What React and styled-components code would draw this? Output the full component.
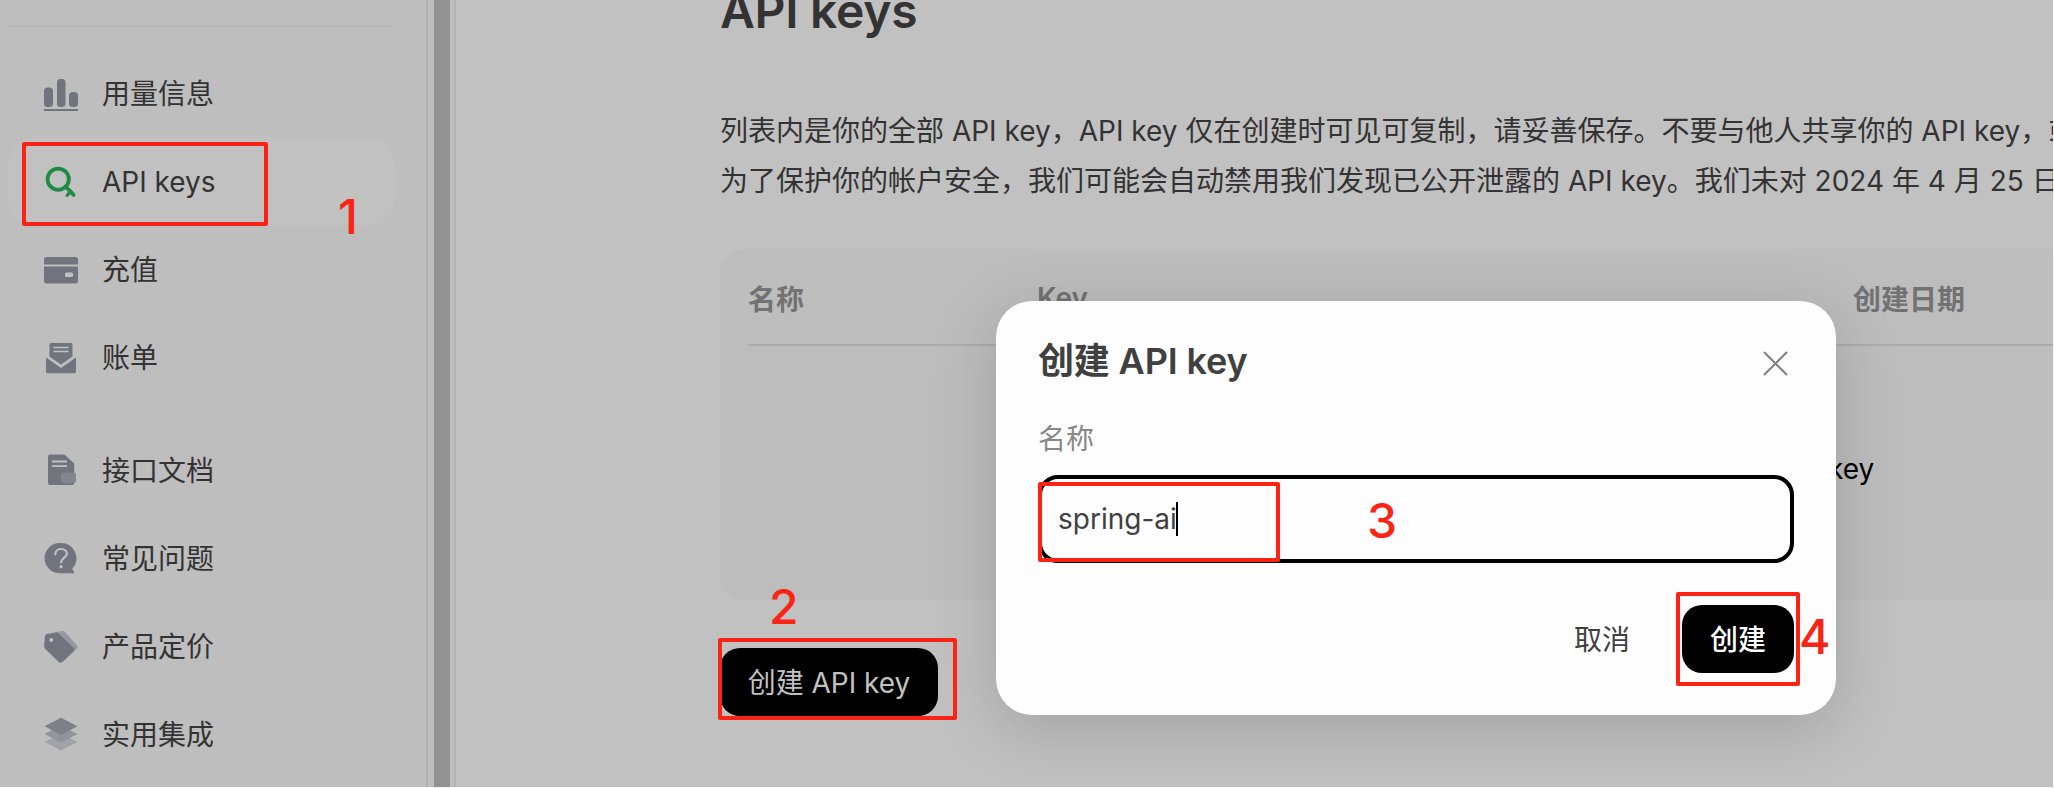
import React from 'react';
import styled, { createGlobalStyle } from 'styled-components';

const Global = createGlobalStyle`
  *, *::before, *::after { box-sizing: border-box; }
  body {
    margin: 0;
    background: #c1c1c1;
    overflow: hidden;
    font-family: Inter, 'Noto Sans CJK SC', sans-serif;
    font-size: 28px;
    color: #333;
  }
  button, input { font: inherit; }
`;

const Page = styled.div`
  position: relative;
  display: flex;
  width: 2054px;
  height: 788px;
  overflow: hidden;
  border: solid #f4f4f4;
  border-width: 0 1px 1px 0;
`;

const Sidebar = styled.aside`
  flex: none;
  width: 428px;
  padding: 25px 31px 0 8px;
  background: #bebebe;
  border-right: 2px solid #b1b1b1;
`;

const Divider = styled.div`
  height: 2px;
  background: #b9b9b9;
`;

const NavGroup = styled.nav`
  display: flex;
  flex-direction: column;
  margin-top: ${(p) => p.$top}px;
`;

const NavItem = styled.a`
  display: flex;
  align-items: center;
  gap: 23px;
  height: 88px;
  padding-left: 35px;
  line-height: 40px;
  border-radius: 28px;
  background: ${(p) => (p.$active ? '#c1c1c1' : 'transparent')};
`;

const Glyph = styled.svg`
  flex: none;
  width: 36px;
  height: 36px;
`;

const Gutter = styled.div`
  flex: none;
  width: 28px;
  padding-left: 6px;
  background: #bebebe;
  border-right: 2px solid #b3b3b3;
`;

const ScrollTrack = styled.div`
  width: 16px;
  height: 100%;
  background: #929292;
`;

const Main = styled.main`
  flex: 1;
  min-width: 0;
  padding-left: 264px;
  background: #c1c1c1;
`;

const PageTitle = styled.h1`
  margin: -17px 0 0;
  font-size: 48px;
  line-height: 56px;
  font-weight: 600;
  letter-spacing: -0.3px;
`;

const Intro = styled.p`
  margin: 67px 0 0;
  line-height: 50px;
  white-space: nowrap;
`;

const Line = styled.span`
  display: block;
`;

const TableCard = styled.section`
  margin-top: 43px;
  width: 1700px;
  height: 351px;
  padding-left: 28px;
  background: #bdbdbd;
  border-radius: 24px;
`;

const TableHead = styled.div`
  display: grid;
  grid-template-columns: 289px 816px 1fr;
  align-items: center;
  height: 97px;
  padding-top: 2px;
  color: #727272;
  font-weight: 600;
  border-bottom: 2px solid #acacac;
`;

const EmptyNote = styled.div`
  padding: 103px 0 0 1080px;
  line-height: 40px;
  color: #000;
`;

const DarkButton = styled.button`
  display: flex;
  align-items: center;
  justify-content: center;
  width: ${(p) => p.$width}px;
  height: 68px;
  padding: 0 0 2px;
  border: 0;
  border-radius: 20px;
  background: #000;
  color: ${(p) => p.$ink};
  font-weight: ${(p) => p.$weight || 400};
`;

const PageActions = styled.div`
  margin-top: 48px;
`;

const Modal = styled.div`
  position: absolute;
  left: 996px;
  top: 301px;
  width: 840px;
  height: 414px;
  padding: 35px 42px 0;
  border-radius: 36px;
  background: #fdfdfd;
  box-shadow: 0 14px 64px rgba(0, 0, 0, 0.17);
  color: #404040;
`;

const ModalHead = styled.div`
  display: flex;
  align-items: center;
  justify-content: space-between;
  height: 50px;
  padding-right: 6px;
`;

const ModalTitle = styled.h2`
  margin: 0;
  font-size: 36px;
  line-height: 50px;
  font-weight: 600;
  letter-spacing: -0.15px;
`;

const CloseIcon = styled.svg`
  width: 25px;
  height: 25px;
  margin-top: 4px;
`;

const Label = styled.label`
  display: block;
  margin-top: 33px;
  line-height: 40px;
  color: #888;
`;

const Field = styled.div`
  display: flex;
  align-items: center;
  height: 88px;
  margin-top: 16px;
  padding-left: 16px;
  border: 4px solid #000;
  border-radius: 20px;
`;

const Caret = styled.span`
  width: 2px;
  height: 34px;
  margin-left: -1px;
  background: #000;
`;

const ModalActions = styled.div`
  display: flex;
  align-items: center;
  justify-content: flex-end;
  gap: 52px;
  margin-top: 42px;
`;

const TextButton = styled.button`
  padding: 0 0 2px;
  border: 0;
  background: none;
  color: inherit;
`;

const Mark = styled.div`
  position: absolute;
  left: ${(p) => p.$x}px;
  top: ${(p) => p.$y}px;
  width: ${(p) => p.$w}px;
  height: ${(p) => p.$h}px;
  border: 4px solid #fb2414;
  border-radius: 2px;
`;

const Step = styled.div`
  position: absolute;
  left: ${(p) => p.$x}px;
  top: ${(p) => p.$y}px;
  color: #fb2414;
  font-size: 48px;
  line-height: 48px;
  font-weight: 500;
`;

const INK = '#71747c';
const PALE = '#bfc2cb';

const icons = {
  usage: (
    <g fill={INK}>
      <rect x="1" y="11.5" width="9" height="19.5" rx="3.5" />
      <rect x="14" y="3" width="8.5" height="28" rx="3.5" />
      <rect x="26" y="16" width="9" height="15" rx="3.5" />
      <rect x="1" y="33" width="34" height="2" />
    </g>
  ),
  key: (
    <g fill="none" stroke="#1f8a43" strokeWidth="3.8">
      <circle cx="15.2" cy="15.2" r="10.6" />
      <path d="M22.600 22.600 30.600 30.800" strokeLinecap="round" />
      <path d="M27.800 27.200 24.200 31.200" strokeLinecap="round" strokeWidth="3.2" />
    </g>
  ),
  card: (
    <g>
      <path fill={INK} d="M3.500 5h29A2.500 2.500 0 0 1 35 7.500V12.500H1V7.500A2.500 2.500 0 0 1 3.500 5Z" />
      <path fill={INK} d="M1 14.500H35V29A2.500 2.500 0 0 1 32.500 31.500H3.500A2.500 2.500 0 0 1 1 29Z" />
      <rect x="22" y="20.500" width="8" height="4.500" rx="1.500" fill={PALE} />
    </g>
  ),
  bill: (
    <g>
      <path fill={INK} d="M8 3H28A1.500 1.500 0 0 1 29.500 4.500V16.500L18 24.500L6.500 16.500V4.500A1.500 1.500 0 0 1 8 3Z" />
      <path fill={INK} d="M3 17.500L18 28L33 17.500V31.500A1.700 1.700 0 0 1 31.300 33.200H4.700A1.700 1.700 0 0 1 3 31.500Z" />
      <path stroke={PALE} strokeWidth="1.600" d="M10.500 7.500H25.500M10.500 11.500H25.500" />
    </g>
  ),
  doc: (
    <g>
      <path fill={INK} d="M7 1.500H21.500L31.200 10.500V30A2 2 0 0 1 29.200 32H7A2 2 0 0 1 5 30V3.500A2 2 0 0 1 7 1.500Z" />
      <path stroke={PALE} strokeWidth="1.800" d="M9 8.500H24M9 13.200H24" />
      <rect x="18" y="19.500" width="15" height="10.500" rx="2.500" fill="#82848f" />
    </g>
  ),
  help: (
    <g>
      <path fill={INK} d="M18 2A15.200 15.200 0 1 0 18 32.300H31.500L29.300 27.500A15.200 15.200 0 0 0 18 2Z" />
      <path fill="none" stroke={PALE} strokeWidth="2.200" strokeLinecap="round" d="M12.300 13.500C12.300 10.300 14.700 8 18 8C21.400 8 23.900 10.200 23.900 13C23.900 16.600 18.100 17 18.100 21.300" />
      <circle cx="18.100" cy="25.700" r="1.600" fill={PALE} />
    </g>
  ),
  tag: (
    <g>
      <path fill="#9698a0" d="M10 4L18.500 2Q20.500 1.600 22 3L34 16.500Q35.500 18 34 19.500L20 33Z" />
      <path fill={INK} d="M4 5L12.500 3.600Q14.500 3.300 16 4.700L30.500 19Q32 20.500 30.600 22L19 33Q17.300 34.500 15.700 33L2.300 20Q1 18.700 1.100 17L2 7Q2.200 5.300 4 5Z" />
      <circle cx="8.300" cy="11" r="1.900" fill={PALE} />
    </g>
  ),
  layers: (
    <g>
      <path fill="#a1a2a8" d="M18 16.500L34.500 25L18 33.600L1.500 25Z" />
      <path fill="#92949c" d="M18 8.500L34.500 17L18 25.500L1.500 17Z" />
      <path fill="#7e8089" d="M18 .8L34.500 9.300L18 17.800L1.500 9.300Z" />
    </g>
  ),
};

const account = [
  ['usage', '用量信息'],
  ['key', 'API keys'],
  ['card', '充值'],
  ['bill', '账单'],
];

const resources = [
  ['doc', '接口文档'],
  ['help', '常见问题'],
  ['tag', '产品定价'],
  ['layers', '实用集成'],
];

const renderItem = ([icon, label]) => (
  <NavItem key={icon} $active={icon === 'key'}>
    <Glyph viewBox="0 0 36 36">{icons[icon]}</Glyph>
    {label}
  </NavItem>
);

export default function App() {
  return (
    <Page lang="zh-CN">
      <Global />
      <Sidebar>
        <Divider />
        <NavGroup $top={23}>{account.map(renderItem)}</NavGroup>
        <NavGroup $top={25}>{resources.map(renderItem)}</NavGroup>
      </Sidebar>
      <Gutter>
        <ScrollTrack />
      </Gutter>
      <Main>
        <PageTitle>API keys</PageTitle>
        <Intro>
          <Line>列表内是你的全部 API key，API key 仅在创建时可见可复制，请妥善保存。不要与他人共享你的 API key，或</Line>
          <Line>为了保护你的帐户安全，我们可能会自动禁用我们发现已公开泄露的 API key。我们未对 2024 年 4 月 25 日</Line>
        </Intro>
        <TableCard>
          <TableHead>
            <span>名称</span>
            <span>Key</span>
            <span>创建日期</span>
          </TableHead>
          <EmptyNote>key</EmptyNote>
        </TableCard>
        <PageActions>
          <DarkButton $width={218} $ink="#c1c1c1">创建 API key</DarkButton>
        </PageActions>
      </Main>

      <Modal>
        <ModalHead>
          <ModalTitle>创建 API key</ModalTitle>
          <CloseIcon viewBox="0 0 25 25" stroke="#808080" strokeWidth="2" strokeLinecap="round">
            <path d="M1.500 1.500 23.500 23.500M23.500 1.500 1.500 23.500" />
          </CloseIcon>
        </ModalHead>
        <Label>名称</Label>
        <Field>
          spring-ai
          <Caret />
        </Field>
        <ModalActions>
          <TextButton>取消</TextButton>
          <DarkButton $width={112} $ink="#fff" $weight={500}>创建</DarkButton>
        </ModalActions>
      </Modal>

      <Mark $x={22} $y={142} $w={246} $h={84} />
      <Step $x={338} $y={193}>1</Step>
      <Mark $x={718} $y={638} $w={239} $h={82} />
      <Step $x={769} $y={583}>2</Step>
      <Mark $x={1038} $y={482} $w={242} $h={80} />
      <Step $x={1367} $y={497}>3</Step>
      <Mark $x={1676} $y={592} $w={124} $h={94} />
      <Step $x={1799} $y={613}>4</Step>
    </Page>
  );
}
